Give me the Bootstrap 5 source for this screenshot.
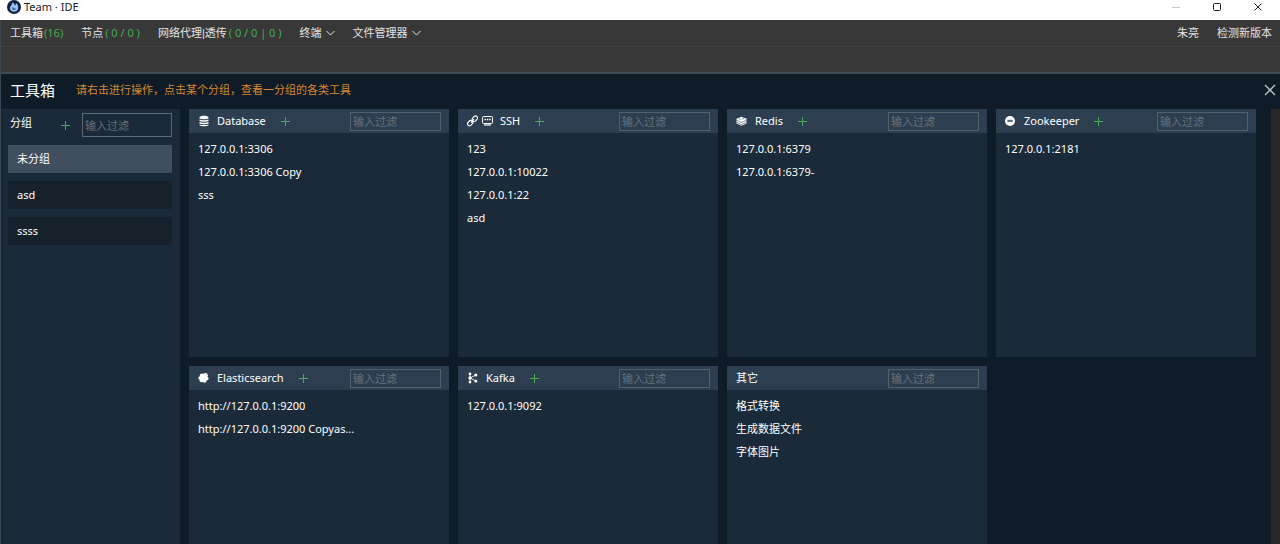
<!DOCTYPE html>
<html lang="zh-CN">
<head>
<meta charset="utf-8">
<meta name="viewport" content="width=device-width, initial-scale=1">
<title>Team · IDE</title>
<link href="https://cdn.jsdelivr.net/npm/bootstrap@5.3.0/dist/css/bootstrap.min.css" rel="stylesheet">
<style>
:root { --gap: 9px; --green: #45ab55; --deep: #0f1c27; --panel: #1b2a38; --head: #2c3e4f; }
body { font: 11px/16px "Noto Sans", "Noto Sans CJK SC", sans-serif; color: #fff; background: var(--deep); }
button { font: inherit; }
a { color: inherit; text-decoration: none; }
svg { display: block; flex: none; }
.app-title { height: 20px; padding: 0 9px 6px 7px; background: #fff; color: #1a1a1a; }
.win-btns { gap: 31px; padding-right: 8px; }
.bare { padding: 0; border: 0; background: none; color: inherit; }
.app-frame { border-left: 1px solid #3c464e; }
.app-menu { height: 27px; padding: 0 8px 0 9px; background: #383838; border-bottom: 1px solid #424242; color: #e4e4e4; }
.app-menu .menu-list { gap: 18px; }
.green { color: var(--green); }
.counts { margin-left: 2px; }
.pipe { font-family: "Liberation Sans", sans-serif; }
.tab-strip { height: 27px; background: #383838; border-bottom: 2px solid #414a52; }
.tool-title { height: 35px; padding: 0 4px 4px 9px; gap: 21px; }
.tool-title h1 { font-size: 15px; line-height: 20px; }
.hint { color: #d88732; }
.work-area { flex: 1 1 0; min-height: 0; }
.groups { width: 179px; padding: 4px 8px 0 7px; background: var(--panel); }
.group-head { height: 24px; padding-left: 2px; margin-bottom: 8px; }
.group-head label { line-height: 20px; }
.group-tools { gap: 12px; }
.filter { width: 91px; height: 19px; padding: 0 2px; border: 1px solid #53616d; border-radius: 0; background: transparent; color: #fff; font: inherit; outline: 0; }
.filter::placeholder { color: #65727d; opacity: 1; }
.group-head .filter { width: 90px; height: 24px; border-color: #5d6a75; }
.group-link { display: block; padding: 6px 9px; background: #17212b; }
.group-link.active { background: #414e5d; }
.group-list { gap: 8px; }
.tool-grid { display: grid; grid-template-columns: repeat(4, minmax(0, 1fr)); grid-auto-rows: 248px; gap: var(--gap); padding: 0 15px 0 var(--gap); }
.tool-card { background: var(--panel); }
.tool-head { height: 24px; padding: 0 8px 0 9px; background: var(--head); }
.tool-head h2 { font-size: 11px; line-height: 16px; margin: 0 15px 0 7px; font-weight: 400; }
.tool-head .plain { margin-left: 0; }
.icons { gap: 4px; }
.tool-list { padding: 4px 9px; margin: 0; }
.tool-list a { display: block; line-height: 23px; }
.rail { width: 9px; flex: none; background: #292929; }
</style>
</head>
<body class="vh-100 d-flex flex-column overflow-hidden">
<svg class="d-none" aria-hidden="true">
  <symbol id="plus" viewBox="0 0 9 9"><path d="M4.500 0v9M0 4.500h9" stroke="currentColor" fill="none"/></symbol>
  <symbol id="chev" viewBox="0 0 9 6"><path d="M.5 1l4 4 4-4" stroke="currentColor" fill="none"/></symbol>
</svg>
<header class="app-title d-flex align-items-center justify-content-between flex-shrink-0">
  <div class="d-flex align-items-center" style="gap:3px">
    <svg width="14" height="14" viewBox="0 0 14 14"><circle cx="7" cy="7" r="7" fill="#0c2342"/><path d="M5.300 2.600C7.200 3 7.400 5 8 5.500c.8-.3.9-1.500.8-2.400C10.600 4 11.600 6 11.100 8.400 10.700 10.500 9 11.700 7 11.700 4.700 11.700 2.900 10.200 2.900 8c0-1.800 2.300-2.900 2.400-5.400z" fill="#9cc3ee"/><path d="M5.300 7c1.200.1 1.200 1.400 2 1.500.6 0 .8-.6.9-1 .7.8.7 2.600-1 2.700C5.600 10.200 5 8.500 5.300 7z" fill="#355f94"/></svg>
    <span>Team · IDE</span>
  </div>
  <div class="win-btns d-flex align-items-center">
    <button class="bare" aria-label="最小化"><svg width="10" height="10"><path d="M1 5.500h8" stroke="#ccc"/></svg></button>
    <button class="bare" aria-label="最大化"><svg width="10" height="10"><rect x="1.500" y="1.500" width="7" height="7" rx="1" fill="none" stroke="#222"/></svg></button>
    <button class="bare" aria-label="关闭窗口"><svg width="10" height="10"><path d="M1.500 1.500l7 7M8.500 1.500l-7 7" stroke="#222"/></svg></button>
  </div>
</header>
<div class="app-frame flex-grow-1 d-flex flex-column overflow-hidden">
  <nav class="app-menu d-flex align-items-center justify-content-between flex-shrink-0">
    <div class="menu-list d-flex align-items-center">
      <a href="#">工具箱<span class="green" style="margin-left:1px">(16)</span></a>
      <a href="#">节点<span class="green counts">( 0 / 0 )</span></a>
      <a href="#">网络代理<span class="pipe">|</span>透传<span class="green counts">( 0 / 0 | 0 )</span></a>
      <button class="bare d-flex align-items-center gap-1">终端 <svg width="9" height="6"><use href="#chev"/></svg></button>
      <button class="bare d-flex align-items-center gap-1">文件管理器 <svg width="9" height="6"><use href="#chev"/></svg></button>
    </div>
    <div class="menu-list d-flex"><a href="#">朱亮</a><a href="#">检测新版本</a></div>
  </nav>
  <div class="tab-strip flex-shrink-0"></div>
  <div class="tool-title d-flex align-items-center flex-shrink-0">
    <h1 class="m-0 fw-normal">工具箱</h1>
    <span class="hint">请右击进行操作，点击某个分组，查看一分组的各类工具</span>
    <button class="bare ms-auto" aria-label="关闭"><svg width="12" height="12"><path d="M1 1l10 10M11 1L1 11" stroke="#c3c8cc" stroke-width="1.300"/></svg></button>
  </div>
  <div class="work-area d-flex overflow-hidden">
    <aside class="groups flex-shrink-0">
      <div class="group-head d-flex align-items-start justify-content-between">
        <label for="group-filter">分组</label>
        <div class="group-tools d-flex align-items-center">
          <button class="bare green" aria-label="新增分组"><svg width="9" height="9"><use href="#plus"/></svg></button>
          <input id="group-filter" class="filter" placeholder="输入过滤">
        </div>
      </div>
      <div class="group-list d-flex flex-column">
        <a href="#" class="group-link active">未分组</a>
        <a href="#" class="group-link">asd</a>
        <a href="#" class="group-link">ssss</a>
      </div>
    </aside>
    <main class="tool-grid flex-grow-1">
      <section class="tool-card">
        <div class="tool-head d-flex align-items-center">
          <svg width="12" height="12" viewBox="0 0 12 12" fill="#fff"><path d="M1.500 2.500C1.500.3 10.500.3 10.500 2.500v1C9 4.600 3 4.600 1.500 3.500zM1.500 4.600c2 .9 7 .9 9 0v1.500c-1.500 1-7.500 1-9 0zM1.500 7.100c2 .9 7 .9 9 0v1.300c-1.500 1-7.500 1-9 0zM1.500 9.400c2 .9 7 .9 9 0v.8c-1.500 1.500-7.500 1.500-9 0z"/></svg>
          <h2>Database</h2>
          <button class="bare green" aria-label="新增 Database"><svg width="9" height="9"><use href="#plus"/></svg></button>
          <input class="filter ms-auto" placeholder="输入过滤" aria-label="过滤 Database">
        </div>
        <ul class="tool-list list-unstyled"><li><a href="#">127.0.0.1:3306</a></li><li><a href="#">127.0.0.1:3306 Copy</a></li><li><a href="#">sss</a></li></ul>
      </section>
      <section class="tool-card">
        <div class="tool-head d-flex align-items-center">
          <div class="icons d-flex">
            <svg width="11" height="12" viewBox="0 0 11 12" fill="none" stroke="#fff" stroke-width="1.200"><rect x="4.800" y="1.700" width="6" height="4" rx="2" transform="rotate(-48 7.800 3.700)"/><rect x=".2" y="6.100" width="6" height="4" rx="2" transform="rotate(-48 3.200 8.100)"/><path d="M4 7.500l3-3.300"/></svg>
            <svg width="11" height="12" viewBox="0 0 11 12" fill="none" stroke="#fff"><path d="M1.500 1.500h8q1 0 1 1v5q0 1-1 1h-8q-1 0-1-1v-5q0-1 1-1z"/><path d="M2.500 4.500h1.500M4.800 4.500h1.500M7.200 4.500h1.500" stroke-width="1.400"/><path d="M2 10h7" stroke-width="1.200"/></svg>
          </div>
          <h2>SSH</h2>
          <button class="bare green" aria-label="新增 SSH"><svg width="9" height="9"><use href="#plus"/></svg></button>
          <input class="filter ms-auto" placeholder="输入过滤" aria-label="过滤 SSH">
        </div>
        <ul class="tool-list list-unstyled"><li><a href="#">123</a></li><li><a href="#">127.0.0.1:10022</a></li><li><a href="#">127.0.0.1:22</a></li><li><a href="#">asd</a></li></ul>
      </section>
      <section class="tool-card">
        <div class="tool-head d-flex align-items-center">
          <svg width="12" height="12" viewBox="0 0 12 12" fill="#fff"><path d="M5.500 1.800l5 2v4.700l-5 2.200-5-2.200V3.800z"/><path d="M.5 5.200l5 2.300 5-2.300M.5 7.300l5 2.300 5-2.300M3 3.500l1.500.8M6.500 3l1.500.8M5.500 4.600l1-.4" stroke="#2c3e4f" stroke-width=".6" fill="none"/></svg>
          <h2>Redis</h2>
          <button class="bare green" aria-label="新增 Redis"><svg width="9" height="9"><use href="#plus"/></svg></button>
          <input class="filter ms-auto" placeholder="输入过滤" aria-label="过滤 Redis">
        </div>
        <ul class="tool-list list-unstyled"><li><a href="#">127.0.0.1:6379</a></li><li><a href="#">127.0.0.1:6379-</a></li></ul>
      </section>
      <section class="tool-card">
        <div class="tool-head d-flex align-items-center">
          <svg width="12" height="12" viewBox="0 0 12 12"><circle cx="5" cy="6" r="5" fill="#fff"/><path d="M2 6.300c.3-2 5.700-2 6 0-1 1-5 1-6 0z" fill="#2c3e4f"/><path d="M3.500 6h3" stroke="#b8c0c7" stroke-width=".8"/></svg>
          <h2>Zookeeper</h2>
          <button class="bare green" aria-label="新增 Zookeeper"><svg width="9" height="9"><use href="#plus"/></svg></button>
          <input class="filter ms-auto" placeholder="输入过滤" aria-label="过滤 Zookeeper">
        </div>
        <ul class="tool-list list-unstyled"><li><a href="#">127.0.0.1:2181</a></li></ul>
      </section>
      <section class="tool-card">
        <div class="tool-head d-flex align-items-center">
          <svg width="12" height="12" viewBox="0 0 12 12" fill="#fff"><circle cx="4" cy="3.800" r="2.300"/><circle cx="7.300" cy="3.600" r="2.500"/><circle cx="8.700" cy="6.600" r="1.900"/><circle cx="6.500" cy="8.800" r="2"/><circle cx="3.500" cy="8.200" r="2"/><circle cx="2.200" cy="6" r="1.800"/><circle cx="5.500" cy="6.200" r="3"/></svg>
          <h2>Elasticsearch</h2>
          <button class="bare green" aria-label="新增 Elasticsearch"><svg width="9" height="9"><use href="#plus"/></svg></button>
          <input class="filter ms-auto" placeholder="输入过滤" aria-label="过滤 Elasticsearch">
        </div>
        <ul class="tool-list list-unstyled"><li><a href="#">http://127.0.0.1:9200</a></li><li><a href="#">http://127.0.0.1:9200 Copyas...</a></li></ul>
      </section>
      <section class="tool-card">
        <div class="tool-head d-flex align-items-center">
          <svg width="12" height="12" viewBox="0 0 12 12" fill="#fff"><path d="M3 2v8M3 6l5.500-2.800M3 6l5.500 2.800" fill="none" stroke="#fff" stroke-width=".8"/><circle cx="3" cy="1.900" r="1.300"/><circle cx="3" cy="6" r="1.700"/><circle cx="3" cy="10.100" r="1.300"/><circle cx="8.800" cy="3" r="1.500"/><circle cx="8.800" cy="9" r="1.500"/></svg>
          <h2>Kafka</h2>
          <button class="bare green" aria-label="新增 Kafka"><svg width="9" height="9"><use href="#plus"/></svg></button>
          <input class="filter ms-auto" placeholder="输入过滤" aria-label="过滤 Kafka">
        </div>
        <ul class="tool-list list-unstyled"><li><a href="#">127.0.0.1:9092</a></li></ul>
      </section>
      <section class="tool-card">
        <div class="tool-head d-flex align-items-center">
          <h2 class="plain">其它</h2>
          <input class="filter ms-auto" placeholder="输入过滤" aria-label="过滤其它">
        </div>
        <ul class="tool-list list-unstyled"><li><a href="#">格式转换</a></li><li><a href="#">生成数据文件</a></li><li><a href="#">字体图片</a></li></ul>
      </section>
    </main>
    <div class="rail"></div>
  </div>
</div>
<script src="https://cdn.jsdelivr.net/npm/bootstrap@5.3.0/dist/js/bootstrap.bundle.min.js"></script>
</body>
</html>
